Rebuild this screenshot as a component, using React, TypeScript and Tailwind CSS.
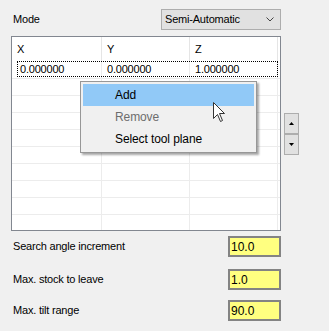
import React from 'react';

const ROWS = [
  ['0.000000', '0.000000', '1.000000'],
  ['', '', ''],
  ['', '', ''],
  ['', '', ''],
  ['', '', ''],
  ['', '', ''],
  ['', '', ''],
  ['', '', ''],
  ['', '', ''],
  ['', '', ''],
];

const FIELDS = [
  { label: 'Search angle increment', value: '10.0', mt: 'mt-[5px]' },
  { label: 'Max. stock to leave', value: '1.0', mt: 'mt-[12px]' },
  { label: 'Max. tilt range', value: '90.0', mt: 'mt-[10px]' },
];

const MENU = [
  { label: 'Add', active: true },
  { label: 'Remove', disabled: true },
  { label: 'Select tool plane' },
];

const Cursor = () => (
  <svg width="13" height="20" viewBox="0 0 13 20" className="absolute left-[213px] top-[102px]">
    <path
      d="M0.5 0.5 L0.5 16.5 L4.5 12.5 L7.5 19.5 L9.5 18.5 L6.5 11.5 L11.5 11.5 Z"
      fill="#fff"
      stroke="#333"
      strokeWidth="1"
    />
  </svg>
);

const ContextMenu = () => (
  <div className="absolute left-[80px] top-[81px] w-[177px] border border-[#979797] bg-[#f0f0f0] p-[2px] text-[12px] tracking-[-0.1px] shadow-[2px_2px_2px_rgba(0,0,0,0.35)]">
    {MENU.map((item) => (
      <div
        key={item.label}
        className={`flex h-[22px] items-center pl-[32px] ${item.active ? 'bg-[#91c9f7]' : ''} ${
          item.disabled ? 'text-[#6d6d6d]' : 'text-black'
        }`}
      >
        {item.label}
      </div>
    ))}
  </div>
);

const SpinButton = ({ up }: { up?: boolean }) => (
  <div className="flex h-[21px] w-[15px] items-center justify-center border border-[#adadad] bg-[#e1e1e1]">
    <svg width="5" height="3" viewBox="0 0 5 3">
      {up ? <path d="M2.5 0 L5 3 L0 3 Z" fill="#000" /> : <path d="M0 0 L5 0 L2.5 3 Z" fill="#000" />}
    </svg>
  </div>
);

export default function App() {
  return (
    <div className="relative h-[331px] w-[329px] overflow-hidden bg-[#f0f0f0] font-['Liberation_Sans',Arial,sans-serif] text-[11px] tracking-[-0.2px] text-black">
      {/* Mode */}
      <div className="mt-[9px] flex h-[21px] items-center">
        <span className="ml-[13px] w-[148px]">Mode</span>
        <div className="flex h-[21px] w-[120px] items-center justify-between border border-[#adadad] bg-[#e1e1e1] pl-[3px] pr-[6px]">
          <span>Semi-Automatic</span>
          <svg width="8" height="5" viewBox="0 0 8 5">
            <polyline points="0.5,0.5 4,4 7.5,0.5" fill="none" stroke="#444" strokeWidth="1" />
          </svg>
        </div>
      </div>

      {/* Table + spin */}
      <div className="mt-[6px] flex">
        <div className="ml-[11px] h-[195px] w-[270px] overflow-hidden border border-[#828790] bg-white">
          <div className="flex h-[24px]">
            {['X', 'Y', 'Z'].map((h, i) => (
              <div
                key={h}
                className={`flex h-full items-center border-r border-[#e5e5e5] pl-[5px] ${
                  i === 0 ? 'w-[90px]' : 'w-[88px]'
                }`}
              >
                {h}
              </div>
            ))}
          </div>
          {ROWS.map((row, r) => (
            <div
              key={r}
              className={`relative flex border-b border-[#ececec] ${r === 0 ? 'h-[18px]' : 'h-[17px]'}`}
            >
              {row.map((v, c) => (
                <div
                  key={c}
                  className={`flex h-full items-center border-r border-[#ececec] ${
                    c === 0 ? 'w-[90px] pl-[8px]' : 'w-[88px] pl-[5px]'
                  }`}
                >
                  {v}
                </div>
              ))}
              {r === 0 && (
                <div className="pointer-events-none absolute left-[5px] top-0 h-[16px] w-[261px] border border-dotted border-black" />
              )}
            </div>
          ))}
        </div>
        <div className="ml-[3px] mt-[77px] flex flex-col">
          <SpinButton up />
          <SpinButton />
        </div>
      </div>

      {/* Fields */}
      {FIELDS.map((f) => (
        <div key={f.label} className={`${f.mt} flex h-[21px] items-center`}>
          <span className="ml-[13px] w-[215px]">{f.label}</span>
          <div className="flex h-[21px] w-[53px] items-center border-2 border-[#838383] bg-[#ffff80] pl-[1px] text-[12px] tracking-normal">
            {f.value}
          </div>
        </div>
      ))}

      <ContextMenu />
      <Cursor />
    </div>
  );
}
